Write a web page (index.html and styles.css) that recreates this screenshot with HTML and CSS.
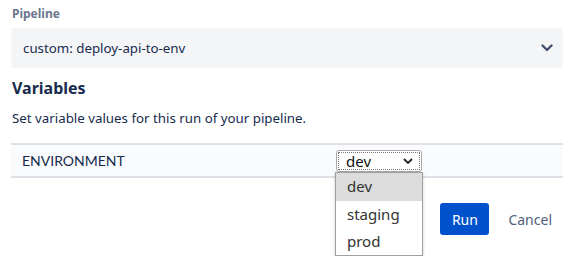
FILE: index.html
```html
<!DOCTYPE html>
<html lang="en">
<head>
    <meta charset="UTF-8">
    <title>Run pipeline</title>
    <link rel="stylesheet" href="styles.css">
</head>
<body>
    <div class="container">
        <div class="field">
            <label class="field-label">Pipeline</label>
            <div class="select-box">
                <span>custom: deploy-api-to-env</span>
                <svg class="chevron" width="12" height="8" viewBox="0 0 12 8">
                    <path d="M1.5 1.5 L6 6 L10.5 1.5" fill="none" stroke="#42526e" stroke-width="2.4" stroke-linecap="round" stroke-linejoin="round"/>
                </svg>
            </div>
        </div>

        <h2>Variables</h2>
        <p class="desc">Set variable values for this run of your pipeline.</p>

        <div class="var-row">
            <div class="var-name">ENVIRONMENT</div>
            <div class="var-value">
                <div class="native-select">
                    <span>dev</span>
                    <svg width="10" height="6" viewBox="0 0 10 6">
                        <path d="M1 1 L5 5 L9 1" fill="none" stroke="#222" stroke-width="1.8"/>
                    </svg>
                </div>
                <ul class="options">
                    <li class="active">dev</li>
                    <li>staging</li>
                    <li>prod</li>
                </ul>
            </div>
        </div>

        <div class="actions">
            <button class="btn btn-primary">Run</button>
            <button class="btn btn-subtle">Cancel</button>
        </div>
    </div>
</body>
</html>
```

FILE: styles.css
```css
* {
    margin: 0;
    padding: 0;
    box-sizing: border-box;
}

html, body {
    height: 100%;
}

body {
    font-family: 'Noto Sans', sans-serif;
    color: #172b4d;
    background: white;
    overflow: hidden;
}

.container {
    padding: 0 9px 0 11px;
}

.field-label {
    display: block;
    margin-top: 6px;
    font-size: 12px;
    line-height: 16px;
    font-weight: 700;
    color: #6b778c;
    padding-left: 1px;
}

.select-box {
    margin-top: 6px;
    height: 40px;
    background: #f4f5f7;
    border-radius: 3px;
    padding: 0 10px 0 12px;
    display: flex;
    align-items: center;
    justify-content: space-between;
    font-size: 13.3px;
}

h2 {
    margin-top: 10px;
    font-size: 16px;
    line-height: 20px;
    font-weight: 700;
    padding-left: 1px;
}

.desc {
    margin-top: 10px;
    font-size: 13.3px;
    line-height: 20px;
    padding-left: 1px;
}

.var-row {
    margin-top: 15px;
    display: grid;
    grid-template-columns: 325px 1fr;
    align-items: center;
    height: 35px;
    background: #fafbfc;
    border-top: 2px solid #dfe1e6;
    border-bottom: 2px solid #dfe1e6;
}

.var-name {
    padding-left: 11px;
    font-family: Lato, sans-serif;
    font-size: 14px;
    color: #172b4d;
}

.var-value {
    position: relative;
    width: 86px;
}

.native-select {
    height: 22px;
    border: 1px solid #a9a9a9;
    border-radius: 3px;
    background: white;
    display: flex;
    align-items: center;
    justify-content: space-between;
    padding: 0 8px 0 9px;
    font-size: 15px;
    color: #111;
    outline: 1px dotted #777;
    outline-offset: -3px;
}

.options {
    position: absolute;
    z-index: 10;
    top: 22px;
    left: -1px;
    width: 88px;
    list-style: none;
    background: white;
    border: 1px solid #a0a0a0;
    box-shadow: 0 1px 3px rgba(0,0,0,0.2);
    font-size: 15px;
    color: #333;
}

.options li {
    height: 27px;
    line-height: 27px;
    padding-left: 11px;
}

.options li.active {
    background: #dcdcdc;
    height: 28px;
}

.actions {
    margin-top: 25px;
    display: flex;
    justify-content: flex-end;
    gap: 6px;
}

.btn {
    height: 32px;
    border: none;
    border-radius: 3px;
    font-family: 'Noto Sans', sans-serif;
    font-size: 14px;
    padding: 0 12px;
    cursor: pointer;
}

.btn-primary {
    background: #0052cc;
    color: white;
    width: 49px;
    padding: 0;
}

.btn-subtle {
    background: none;
    color: #505f79;
    padding: 0 11px 0 13px;
}
```
